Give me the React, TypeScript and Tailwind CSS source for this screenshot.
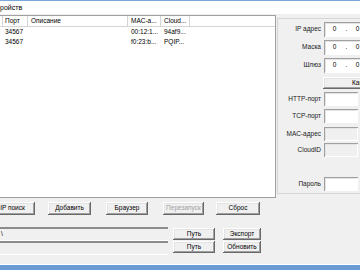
import React from "react";

const btn =
  "flex items-center justify-center bg-[#f0f0f0] shadow-[inset_-1px_-1px_#696969,inset_1px_1px_#ffffff,inset_-2px_-2px_#a0a0a0,inset_2px_2px_#e3e3e3]";
const sunken =
  "shadow-[inset_1px_1px_#a0a0a0,inset_-1px_-1px_#ffffff,inset_2px_2px_#e3e3e3]";

function Row({
  label,
  mt,
  h,
  children,
}: {
  label: string;
  mt: string;
  h: string;
  children: React.ReactNode;
}) {
  return (
    <div className={`flex items-stretch ${mt} ${h}`}>
      <div className="w-[44px] shrink-0 flex items-center justify-end pr-[1px] text-[#1a1a1a]">
        {label}
      </div>
      <div className="ml-[2px] flex-1 flex">{children}</div>
    </div>
  );
}

function IpBox() {
  return (
    <div className={`flex items-center bg-white w-[80px] ${sunken}`}>
      <span className="w-[21px] text-center">0</span>
      <span className="w-[3px] text-center">.</span>
      <span className="w-[19px] text-center">0</span>
    </div>
  );
}

function Box({ disabled }: { disabled?: boolean }) {
  return (
    <div
      className={`w-[34px] ${disabled ? "bg-[#f0f0f0]" : "bg-white"} ${sunken}`}
    />
  );
}

export default function App() {
  return (
    <div className="w-[360px] h-[270px] overflow-hidden bg-[#f0f0f0] flex flex-col font-['Liberation_Sans',Arial,sans-serif] text-[6.5px] leading-none text-black">
      <div className="h-[1px] bg-[#7aa9d9] shrink-0" />
      <div className="h-[13px] bg-white flex items-center shrink-0 text-[7px]">
        <span>ройств</span>
      </div>
      <div className="flex flex-1 min-h-0">
        {/* left column */}
        <div className="w-[276px] shrink-0 flex flex-col">
          <div className="mt-[1px] h-[183px] bg-white border-t border-r border-b border-[#a0a0a0] flex flex-col">
            <div className="h-[11px] flex border-b border-[#d5d5d5] shrink-0">
              <div className="w-[3px] border-r border-[#d5d5d5]" />
              <div className="w-[25px] border-r border-[#d5d5d5] flex items-center pl-[2px]">
                Порт
              </div>
              <div className="w-[100px] border-r border-[#d5d5d5] flex items-center pl-[3px]">
                Описание
              </div>
              <div className="w-[33px] border-r border-[#d5d5d5] flex items-center pl-[3px]">
                MAC-а...
              </div>
              <div className="w-[29px] border-r border-[#d5d5d5] flex items-center pl-[3px]">
                Cloud...
              </div>
            </div>
            {[
              ["34567", "00:12:1...", "94af9..."],
              ["34567", "f0:23:b...", "PQIP..."],
            ].map((r, i) => (
              <div key={i} className="h-[10px] flex items-center">
                <div className="w-[3px]" />
                <div className="w-[25px] pl-[2px]">{r[0]}</div>
                <div className="w-[100px]" />
                <div className="w-[33px] pl-[3px]">{r[1]}</div>
                <div className="w-[29px] pl-[3px]">{r[2]}</div>
              </div>
            ))}
          </div>

          {/* button row */}
          <div className="mt-[4px] h-[13px] flex shrink-0">
            <div className={`${btn} -ml-[10px] w-[45px]`}>IP поиск</div>
            <div className={`${btn} ml-[13px] w-[43px]`}>Добавить</div>
            <div className={`${btn} ml-[15px] w-[42px]`}>Браузер</div>
            <div className={`${btn} ml-[15px] w-[41px] text-[#a0a0a0]`}>
              Перезапуск
            </div>
            <div className={`${btn} ml-[12px] w-[44px]`}>Сброс</div>
          </div>

          {/* path rows */}
          <div className="mt-[12px] flex flex-col">
            <div className="h-[14px] flex">
              <div className="w-[168px] border-t-2 border-t-[#8c8c8c] border-b border-b-[#ffffff] flex items-center pl-[1px]">
                \
              </div>
              <div className={`${btn} ml-[5px] mt-[1px] w-[42px] h-[12px]`}>
                Путь
              </div>
              <div className={`${btn} ml-[8px] mt-[1px] w-[38px] h-[12px]`}>
                Экспорт
              </div>
            </div>
            <div className="h-[14px] flex">
              <div className="w-[168px] border-t-2 border-t-[#8c8c8c] border-b border-b-[#ffffff]" />
              <div className={`${btn} ml-[5px] w-[42px] h-[12px]`}>Путь</div>
              <div className={`${btn} ml-[8px] w-[38px] h-[12px]`}>
                Обновить
              </div>
            </div>
          </div>
        </div>

        {/* right panel */}
        <div className="flex-1 min-w-0">
          <div className="mt-[4px] ml-[1px] h-[176px] w-[120px] border border-[#d5d5d5] flex flex-col">
            <Row label="IP адрес" mt="mt-[3px]" h="h-[15px]">
              <IpBox />
            </Row>
            <Row label="Маска" mt="mt-[3px]" h="h-[15px]">
              <IpBox />
            </Row>
            <Row label="Шлюз" mt="mt-[3px]" h="h-[15px]">
              <IpBox />
            </Row>
            <div className="mt-[4px] h-[12px] flex">
              <div
                className={`${btn} ml-[45px] w-[80px] !justify-start pl-[29px]`}
              >
                Камера
              </div>
            </div>
            <Row label="HTTP-порт" mt="mt-[3px]" h="h-[14px]">
              <Box />
            </Row>
            <Row label="TCP-порт" mt="mt-[3px]" h="h-[14px]">
              <Box />
            </Row>
            <Row label="MAC-адрес" mt="mt-[4px]" h="h-[14px]">
              <Box disabled />
            </Row>
            <Row label="CloudID" mt="mt-[2px]" h="h-[14px]">
              <Box disabled />
            </Row>
            <Row label="Пароль" mt="mt-[20px]" h="h-[14px]">
              <Box />
            </Row>
          </div>
        </div>
      </div>
      <div className="h-[1px] bg-[#ffffff] shrink-0" />
      <div className="h-[5px] bg-[#6b9bd2] shrink-0" />
    </div>
  );
}
